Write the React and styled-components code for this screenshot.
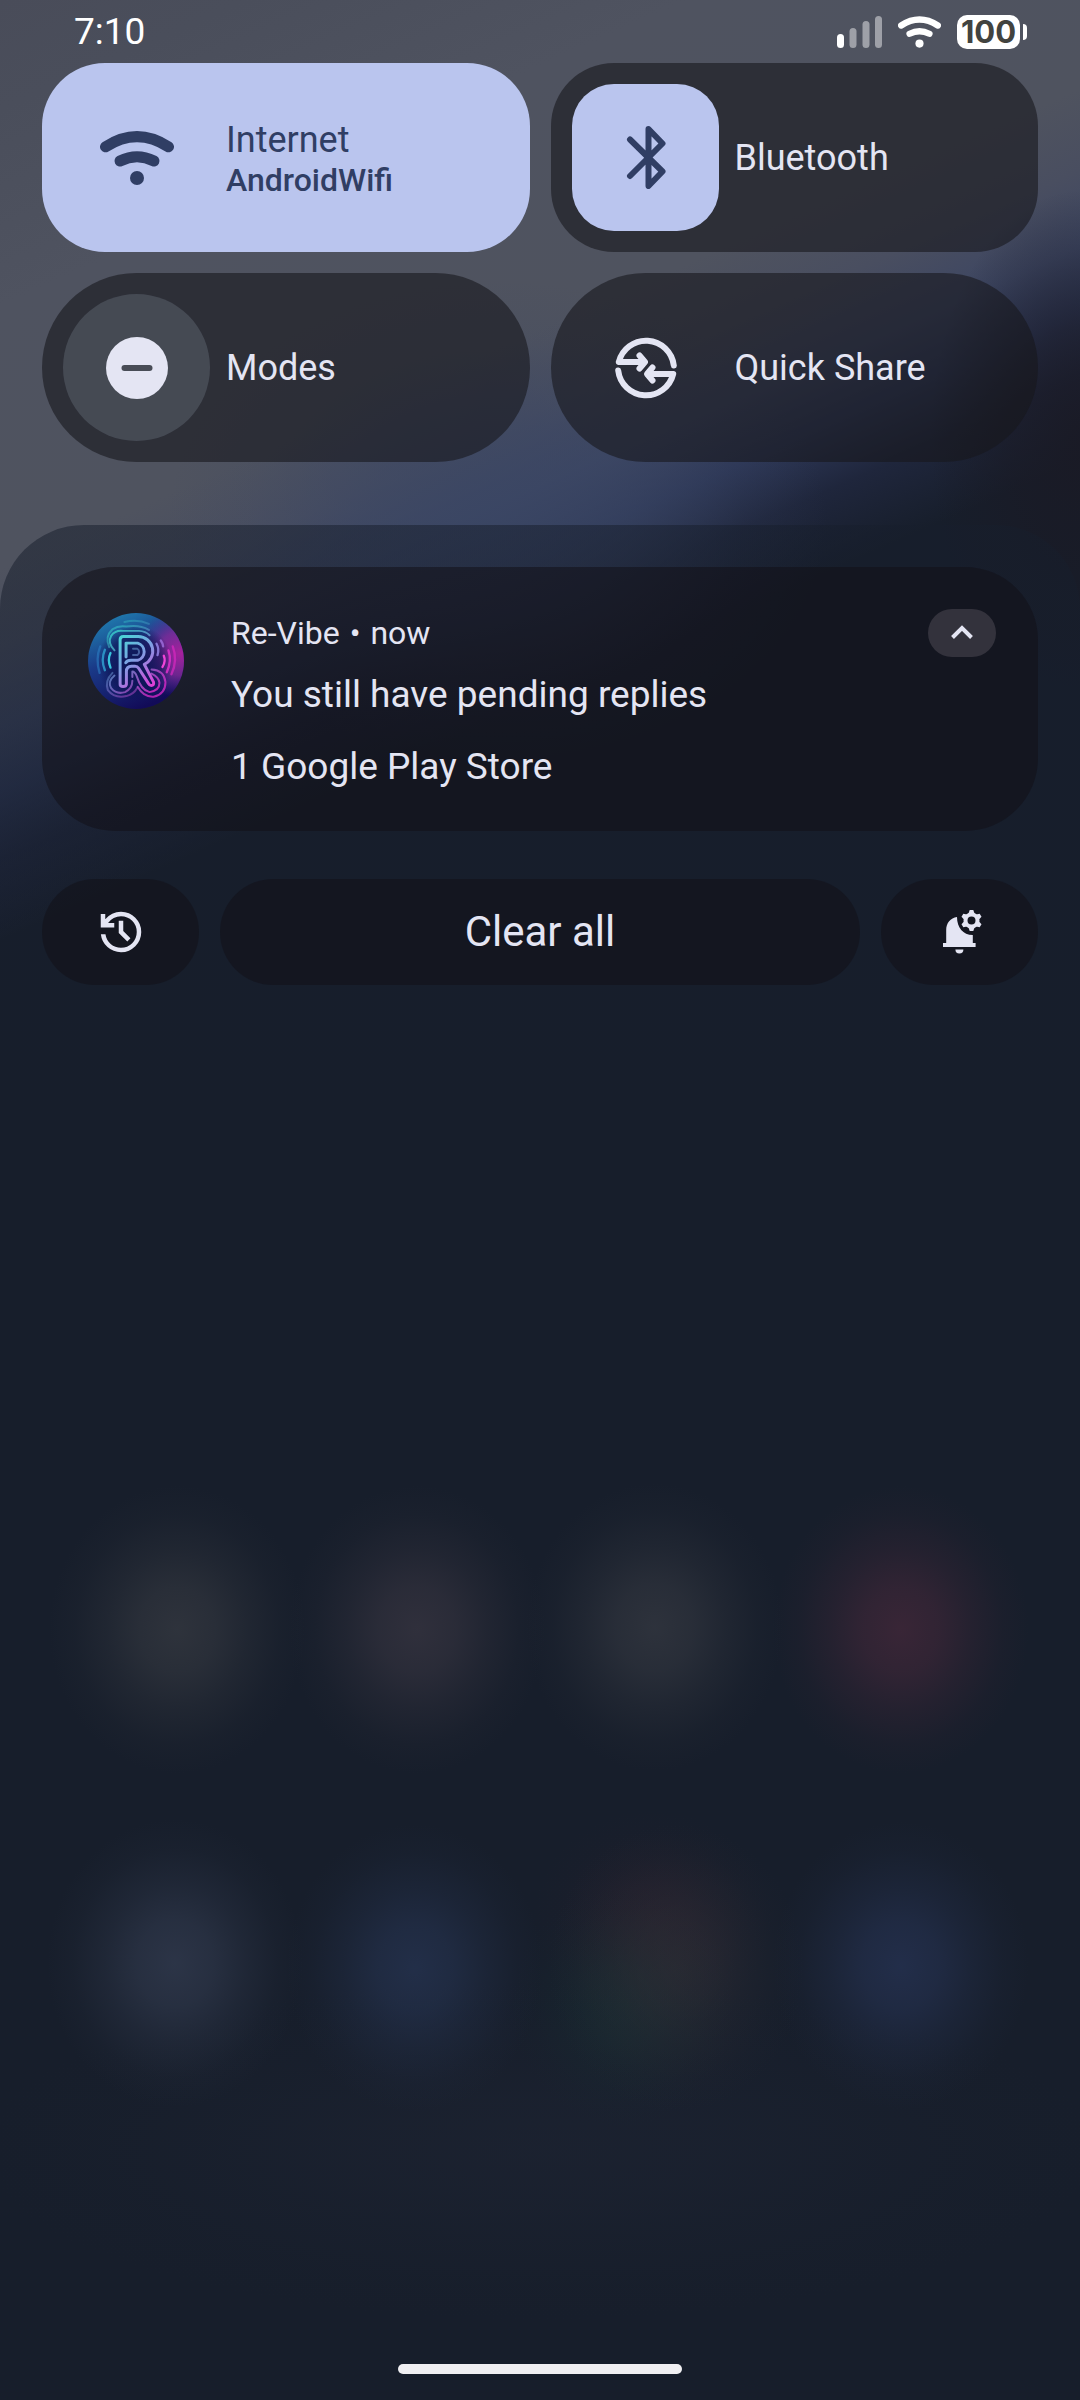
import React from "react";
import styled, { createGlobalStyle } from "styled-components";

const color = {
  accent: "#bac5ee",
  onAccent: "#303e64",
  text: "#e4e5f3",
  tile: "rgba(24, 24, 28, 0.6)",
  card: "rgba(18, 17, 24, 0.55)",
};

const GlobalStyle = createGlobalStyle`
  *, *::before, *::after { box-sizing: border-box; }
  body { margin: 0; background: #171e2b; }
  h2, p { margin: 0; font-weight: 400; }
  svg { display: block; }
`;

const glow = (x, y, rgb, alpha, w = 128, h = 144) =>
  `radial-gradient(${w}px ${h}px at ${x}% ${y}%, rgba(${rgb}, ${alpha}) 0%, rgba(${rgb}, ${alpha * 0.76}) 30%, rgba(${rgb}, ${alpha * 0.4}) 55%, rgba(${rgb}, ${alpha * 0.12}) 80%, rgba(${rgb}, 0) 100%)`;

const wallpaper = [
  glow(16.4, 67.9, "52, 56, 64", 0.8),
  glow(38.6, 67.9, "54, 52, 64", 0.8),
  glow(60.6, 67.8, "51, 55, 64", 0.8),
  glow(83.4, 67.9, "68, 40, 58", 0.75),
  glow(16.2, 81.8, "49, 58, 78", 0.8),
  glow(38.4, 82, "38, 52, 82", 0.75),
  glow(62.6, 82, "52, 50, 56", 0.5),
  glow(57.6, 83.6, "24, 50, 52", 0.5, 110, 120),
  glow(60.4, 80, "50, 32, 46", 0.4, 120, 110),
  glow(83.4, 81.9, "38, 51, 84", 0.75),
  glow(50, 89.6, "31, 37, 52", 0.5, 560, 170),
  "radial-gradient(150px 250px at 100% 440px, rgba(26, 26, 37, 0.9) 0%, rgba(26, 26, 37, 0.6) 45%, rgba(26, 26, 37, 0) 100%)",
  "radial-gradient(330px 240px at 46% 520px, rgba(58, 70, 100, 0.8) 0%, rgba(58, 70, 100, 0.55) 40%, rgba(58, 70, 100, 0.15) 75%, rgba(58, 70, 100, 0) 100%)",
  "linear-gradient(156deg, #494c59 0px, #4a4e5b 100px, #4f5360 280px, #4f535f 520px, #494e60 595px, #3d4662 665px, #2d3756 725px, #1f263c 785px, #171e2b 860px)",
].join(", ");

const Screen = styled.div`
  min-height: 100vh;
  display: flex;
  flex-direction: column;
  background: ${wallpaper};
  color: ${color.text};
  font-family: Roboto, "Noto Sans", sans-serif;
  font-size: 37px;
`;

const StatusBar = styled.header`
  height: 63px;
  padding: 0 53px 0 74px;
  display: flex;
  align-items: center;
  justify-content: space-between;
  color: #fff;
`;

const StatusIcons = styled.div`
  display: flex;
  align-items: center;
  gap: 16px;
`;

const Battery = styled.div`
  display: flex;
  align-items: center;
  gap: 3px;
`;

const BatteryBody = styled.span`
  width: 63px;
  height: 34px;
  border-radius: 10px;
  background: #fff;
  color: #42433f;
  display: flex;
  align-items: center;
  justify-content: center;
  font: 700 31px/34px Inter, Roboto, sans-serif;
`;

const BatteryTip = styled.span`
  width: 4px;
  height: 16px;
  border-radius: 0 4px 4px 0;
  background: #fff;
`;

const Tiles = styled.section`
  display: grid;
  grid-template-columns: 1fr 1fr;
  gap: 21px;
  padding: 0 42px 63px;
`;

const Tile = styled.button`
  height: 189px;
  padding: 21px;
  border: 0;
  border-radius: ${(p) => (p.$square ? 63 : 95)}px;
  background: ${(p) => (p.$active ? color.accent : color.tile)};
  color: ${(p) => (p.$active ? color.onAccent : color.text)};
  display: flex;
  align-items: center;
  gap: 16px;
  font: inherit;
  text-align: left;
`;

const iconBackgrounds = {
  none: "transparent",
  accent: color.accent,
  dim: "rgba(210, 226, 250, 0.15)",
};

const TileIcon = styled.span`
  width: 147px;
  height: 147px;
  flex: none;
  border-radius: ${(p) => (p.$fill === "accent" ? 42 : 74)}px;
  background: ${(p) => iconBackgrounds[p.$fill]};
  color: ${(p) => (p.$fill === "accent" ? color.onAccent : "inherit")};
  display: flex;
  align-items: center;
  justify-content: center;
`;

const TileText = styled.span`
  display: flex;
  flex-direction: column;
`;

const TileLabel = styled.span`
  font-size: 36px;
  line-height: 44px;
`;

const TileDetail = styled.span`
  font-size: 32px;
  font-weight: 500;
  line-height: 36px;
`;

const Shade = styled.main`
  flex: 1;
  display: flex;
  flex-direction: column;
  padding: 42px 42px 26px;
  border-radius: 84px 84px 0 0;
  background: linear-gradient(rgba(23, 30, 44, 0.52) 0px, rgba(23, 30, 44, 0.52) 300px, rgba(23, 30, 44, 0) 600px);
`;

const Card = styled.article`
  display: flex;
  gap: 47px;
  padding: 42px 42px 42px 46px;
  border-radius: 73px;
  background: ${color.card};
`;

const Avatar = styled.span`
  flex: none;
  padding-top: 4px;
`;

const CardBody = styled.div`
  flex: 1;
`;

const CardHeader = styled.div`
  display: flex;
  align-items: center;
  justify-content: space-between;
  height: 48px;
`;

const Source = styled.div`
  display: flex;
  gap: 10px;
  font-size: 32px;
  line-height: 38px;
`;

const CardTitle = styled.h2`
  margin-top: 16px;
  font-size: 37px;
  line-height: 44px;
`;

const CardText = styled.p`
  margin-top: 28px;
  line-height: 44px;
`;

const Collapse = styled.button`
  width: 68px;
  height: 48px;
  padding: 0;
  border: 0;
  border-radius: 24px;
  background: #33323c;
  color: ${color.text};
  display: flex;
  align-items: center;
  justify-content: center;
`;

const Actions = styled.div`
  display: grid;
  grid-template-columns: 157px 1fr 157px;
  gap: 21px;
  margin-top: 48px;
`;

const Action = styled.button`
  height: 106px;
  padding: 0;
  border: 0;
  border-radius: 53px;
  background: ${color.card};
  color: ${color.text};
  display: flex;
  align-items: center;
  justify-content: center;
  font: 42px/50px Roboto, "Noto Sans", sans-serif;
`;

const HomeHandle = styled.div`
  width: 284px;
  height: 10px;
  margin: auto auto 0;
  border-radius: 5px;
  background: #f0eff2;
`;

const SignalIcon = () => (
  <svg width="45" height="32" viewBox="0 0 45 32" fill="#fff" role="img" aria-label="Signal">
    <rect x="0" y="18" width="7" height="14" rx="3.5" />
    <g opacity="0.45">
      <rect x="12.5" y="12" width="7" height="20" rx="3.5" />
      <rect x="25.5" y="5" width="7" height="27" rx="3.5" />
      <rect x="38" y="0" width="7" height="32" rx="3.5" />
    </g>
  </svg>
);

const WifiIcon = ({ width, height }) => (
  <svg width={width} height={height} viewBox="0 0 74 54" fill="none" stroke="currentColor" strokeWidth="11" strokeLinecap="round">
    <path d="M5.5 15.8Q37 -4.6 68.5 15.8" />
    <path d="M20 30Q37 21.5 54 30" />
    <circle cx="37" cy="47" r="7" fill="currentColor" stroke="none" />
  </svg>
);

const BluetoothIcon = () => (
  <svg width="41" height="63" viewBox="-2 0 41 63" fill="none" stroke="currentColor" strokeWidth="6" strokeLinecap="round" strokeLinejoin="round">
    <path d="M3 13.5L35.5 45.5L21.5 60V3L35.5 17.5L3 50" />
  </svg>
);

const ModesIcon = () => (
  <svg width="62" height="62" viewBox="0 0 62 62">
    <circle cx="31" cy="31" r="31" fill={color.text} />
    <rect x="15.5" y="28" width="31" height="6" rx="3" fill="#484c56" />
  </svg>
);

const QuickShareIcon = () => (
  <svg width="64" height="62" viewBox="-2 0 64 62" fill="none" stroke="currentColor" strokeWidth="6" strokeLinecap="round" strokeLinejoin="round">
    <path d="M58.8 28.5A28 28 0 0 0 3.8 25H29.5M24.5 18.5L30 25L24.5 31.5" />
    <path d="M3.2 33.5A28 28 0 0 0 58.2 37H32.5M37.5 30.5L32 37L37.5 43.5" />
  </svg>
);

const ChevronUpIcon = () => (
  <svg width="24" height="16" viewBox="0 0 24 16" fill="none" stroke="currentColor" strokeWidth="4">
    <path d="M2.5 12.5L12 3L21.5 12.5" />
  </svg>
);

const HistoryIcon = () => (
  <svg width="54" height="54" viewBox="0 0 24 24" fill="currentColor">
    <path d="M12 21q-3.45 0-6.012-2.287T3.05 13H5.1q.35 2.6 2.313 4.3T12 19q2.925 0 4.963-2.037T19 12t-2.037-4.962T12 5q-1.725 0-3.225.8T6.25 8H9v2H3V4h2v2.35q1.275-1.6 3.113-2.475T12 3q1.875 0 3.513.713t2.85 1.924t1.925 2.85T21 12t-.712 3.513t-1.925 2.85t-2.85 1.925T12 21m2.8-4.8L11 12.4V7h2v4.6l3.2 3.2z" />
  </svg>
);

const BellSettingsIcon = () => (
  <svg width="45" height="44" viewBox="-6 0 45 44" fill="currentColor">
    <path d="M0 33H3.2V20C3.2 13 7.5 8 14 7C14 17.5 20 25 29.8 25V33H32.6V37H0Z" />
    <path d="M12.4 39.5H20.4A4 4 0 0 1 12.4 39.5Z" />
    <g transform="translate(28.5 10.5)">
      <circle r="6" fill="none" stroke="currentColor" strokeWidth="4" />
      {[0, 60, 120, 180, 240, 300].map((angle) => (
        <path key={angle} transform={`rotate(${angle})`} d="M-3 -7L-1.8 -10.5H1.8L3 -7Z" />
      ))}
    </g>
  </svg>
);

const ReVibeLogo = () => (
  <svg width="96" height="96" viewBox="54 69 290 290" role="img" aria-label="Re-Vibe">
    <defs>
      <linearGradient id="disc" gradientUnits="userSpaceOnUse" x1="110" y1="90" x2="230" y2="350">
        <stop offset="0" stopColor="#1f78ac" />
        <stop offset="0.4" stopColor="#1a3a88" />
        <stop offset="1" stopColor="#120b58" />
      </linearGradient>
      <radialGradient id="flare" gradientUnits="userSpaceOnUse" cx="335" cy="190" r="135">
        <stop offset="0" stopColor="#a8209e" />
        <stop offset="0.5" stopColor="#8a2a9c" stopOpacity="0.75" />
        <stop offset="1" stopColor="#5a2a98" stopOpacity="0" />
      </radialGradient>
      <radialGradient id="core" gradientUnits="userSpaceOnUse" cx="195" cy="220" r="115">
        <stop offset="0" stopColor="#0c1150" stopOpacity="0.9" />
        <stop offset="0.7" stopColor="#0c1150" stopOpacity="0.6" />
        <stop offset="1" stopColor="#0c1150" stopOpacity="0" />
      </radialGradient>
      <linearGradient id="neon" gradientUnits="userSpaceOnUse" x1="140" y1="130" x2="275" y2="290">
        <stop offset="0" stopColor="#3fe0d4" />
        <stop offset="0.45" stopColor="#7f9fe4" />
        <stop offset="1" stopColor="#f02cd4" />
      </linearGradient>
    </defs>
    <circle cx="199" cy="214" r="145" fill="url(#disc)" />
    <circle cx="199" cy="214" r="145" fill="url(#flare)" />
    <circle cx="199" cy="214" r="145" fill="url(#core)" />
    <g fill="none" stroke="url(#neon)" strokeLinecap="round" strokeLinejoin="round">
      <g strokeWidth="9">
        <path d="M151 284V150Q151 140 161 140H206A44 44 0 0 1 224 224L252 278Q254 288 245 288Q240 288 236 281L207 236Q203 230 196 230H186Q170 230 170 246V284Q169 291 160 291Q151 291 151 284" />
        <path d="M169 202V160H204A27 27 0 0 1 204 212H184Q172 212 168 219" />
      </g>
      <g strokeWidth="6">
        <path d="M190 177H203A11 11 0 0 1 203 196H190" opacity="0.5" />
        <path d="M134 182Q112 160 124 138Q136 120 160 123H208Q228 124 240 136" opacity="0.7" />
        <path d="M118 172Q104 140 128 118Q146 106 170 110Q210 104 238 120" opacity="0.45" />
        <path d="M164 96Q204 86 238 102" opacity="0.3" />
        <path d="M134 258Q112 276 124 296Q140 316 166 308Q188 298 188 274" opacity="0.65" />
        <path d="M128 250Q104 274 114 302Q134 328 170 320Q192 314 202 296" opacity="0.45" />
        <path d="M188 262V246Q196 246 202 262Q214 302 240 308Q270 304 270 280Q268 262 246 252" opacity="0.75" />
        <path d="M204 292Q222 324 252 322Q288 314 288 278Q284 242 246 240" opacity="0.7" />
      </g>
      <g strokeWidth="7">
        <path d="M122 190Q112 210 122 234" stroke="#38c4dc" />
        <path d="M105 180Q92 210 105 242" stroke="#2f9fd0" opacity="0.85" />
        <path d="M91 170Q76 208 89 250" stroke="#2b7fc4" opacity="0.6" />
        <path d="M261 162Q270 178 264 196" stroke="#8f7fe0" opacity="0.9" />
        <path d="M274 152Q280 160 281 170" stroke="#a070e0" opacity="0.8" />
        <path d="M283 198Q290 214 279 232" stroke="#f044d8" />
        <path d="M297 182Q308 214 292 248" stroke="#e030cc" opacity="0.85" />
        <path d="M310 170Q326 212 306 254" stroke="#d828c0" opacity="0.7" />
      </g>
    </g>
  </svg>
);

export default function App() {
  return (
    <>
      <GlobalStyle />
      <Screen>
        <StatusBar>
          <time>7:10</time>
          <StatusIcons>
            <SignalIcon />
            <WifiIcon width={43} height={32} />
            <Battery>
              <BatteryBody>100</BatteryBody>
              <BatteryTip />
            </Battery>
          </StatusIcons>
        </StatusBar>

        <Tiles>
          <Tile $active $square type="button">
            <TileIcon $fill="none"><WifiIcon width={74} height={54} /></TileIcon>
            <TileText>
              <TileLabel>Internet</TileLabel>
              <TileDetail>AndroidWifi</TileDetail>
            </TileText>
          </Tile>
          <Tile $square type="button">
            <TileIcon $fill="accent"><BluetoothIcon /></TileIcon>
            <TileLabel>Bluetooth</TileLabel>
          </Tile>
          <Tile type="button">
            <TileIcon $fill="dim"><ModesIcon /></TileIcon>
            <TileLabel>Modes</TileLabel>
          </Tile>
          <Tile type="button">
            <TileIcon $fill="none"><QuickShareIcon /></TileIcon>
            <TileLabel>Quick Share</TileLabel>
          </Tile>
        </Tiles>

        <Shade>
          <Card>
            <Avatar><ReVibeLogo /></Avatar>
            <CardBody>
              <CardHeader>
                <Source>
                  <span>Re-Vibe</span>
                  <span>•</span>
                  <time>now</time>
                </Source>
                <Collapse type="button" aria-label="Collapse"><ChevronUpIcon /></Collapse>
              </CardHeader>
              <CardTitle>You still have pending replies</CardTitle>
              <CardText>1 Google Play Store</CardText>
            </CardBody>
          </Card>
          <Actions>
            <Action type="button" aria-label="Notification history"><HistoryIcon /></Action>
            <Action type="button">Clear all</Action>
            <Action type="button" aria-label="Notification settings"><BellSettingsIcon /></Action>
          </Actions>
          <HomeHandle />
        </Shade>
      </Screen>
    </>
  );
}
